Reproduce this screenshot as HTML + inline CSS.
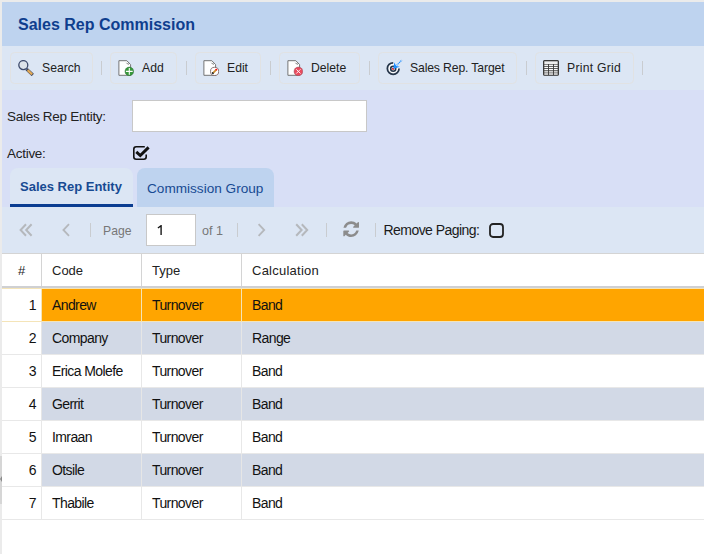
<!DOCTYPE html>
<html><head><meta charset="utf-8">
<style>
*{box-sizing:border-box;margin:0;padding:0}
html,body{width:704px;height:554px;overflow:hidden;background:#ebebeb;font-family:"Liberation Sans",sans-serif;position:relative}
.abs{position:absolute}
#hdr{left:2px;top:2px;width:702px;height:44px;background:#bed3ef}
#title{left:18px;top:15px;font-size:16px;font-weight:bold;color:#0f3e8e;white-space:nowrap;line-height:19px}
#tb{left:2px;top:46px;width:702px;height:44px;background:#dce6f4}
.btn{position:absolute;top:52px;height:32px;border:1px solid #e1e2e3;border-radius:4.5px}
.bt{position:absolute;top:61px;font-size:12.2px;color:#222;white-space:nowrap;line-height:15px}
.sep{position:absolute;top:61px;width:1px;height:14px;background:#c9ccd0}
.ico{position:absolute;top:60px;width:16px;height:16px}
#form{left:2px;top:90px;width:702px;height:117px;background:#d8dff6}
.lbl{position:absolute;font-size:13.5px;letter-spacing:-0.28px;color:#222;white-space:nowrap;line-height:15px}
#inp{left:132px;top:100px;width:235px;height:32px;background:#fff;border:1px solid #c8c8c8}
#tab1{left:10px;top:168px;width:123px;height:39px;background:#dce6f4;border-radius:8px 8px 0 0}
#tab1u{left:10px;top:204px;width:123px;height:3px;background:#0b3d91}
#tab2{left:137px;top:168px;width:137px;height:39px;background:#bed3ef;border-radius:8px 8px 0 0}
.tabt{position:absolute;white-space:nowrap;color:#174a92;line-height:16px}
#pager{left:2px;top:207px;width:702px;height:46px;background:#dce6f4}
.pi{position:absolute;color:#777;white-space:nowrap;line-height:15px;font-size:13px}
#pinp{left:146px;top:214px;width:50px;height:32px;background:#fff;border:1px solid #c8c8c8}
#grid{left:2px;top:253px;width:702px;height:301px;background:#fff;border-top:1px solid #d4d4d4}
.hc{position:absolute;font-size:13px;color:#222;white-space:nowrap;line-height:15px}
.vl{position:absolute;width:1px;background:#e3e3e3}
.row{position:absolute;left:2px;width:702px;height:33px;border-bottom:1px solid #e6e6e6}
.cell{position:absolute;font-size:14px;letter-spacing:-0.6px;color:#111;white-space:nowrap;line-height:15px}
</style></head><body>
<div id="hdr" class="abs"></div>
<div id="title" class="abs">Sales Rep Commission</div>

<div id="tb" class="abs"></div>
<div class="btn" style="left:10px;width:83px"></div>
<div class="btn" style="left:110px;width:67px"></div>
<div class="btn" style="left:195px;width:66px"></div>
<div class="btn" style="left:279px;width:81px"></div>
<div class="btn" style="left:378px;width:139px"></div>
<div class="btn" style="left:535px;width:99px"></div>
<div class="sep" style="left:101px"></div>
<div class="sep" style="left:186px"></div>
<div class="sep" style="left:270px"></div>
<div class="sep" style="left:369px"></div>
<div class="sep" style="left:526px"></div>
<div class="sep" style="left:642px"></div>

<!-- search icon -->
<svg class="ico" style="left:18px" viewBox="0 0 16 16">
<path d="M8.6 9.2 L14.8 15" stroke="#3a4560" stroke-width="3.2" stroke-linecap="butt"/>
<path d="M9.6 10.1 L14.2 14.4" stroke="#e2a955" stroke-width="2.2"/>
<circle cx="5.3" cy="5.1" r="4.5" fill="#dde3ea" stroke="#3e4b6c" stroke-width="1.3"/>
</svg>
<div class="bt" style="left:42px">Search</div>

<!-- add icon -->
<svg class="ico" style="left:118px" viewBox="0 0 16 16">
<path d="M0.9 0.7 H8.8 L12.6 4.6 V15.3 H0.9 Z" fill="#fff" stroke="#6e6e6e" stroke-width="0.95"/>
<path d="M8.5 2.8 Q9.5 4.5 11 4.2" fill="none" stroke="#6e6e6e" stroke-width="0.9"/>
<circle cx="11.3" cy="11.4" r="4.3" fill="#38993b" stroke="#2f6f3a" stroke-width="0.5"/>
<path d="M11.3 8 V14.8 M7.9 11.4 H14.7" stroke="#fff" stroke-width="1.1"/>
</svg>
<div class="bt" style="left:142px">Add</div>

<!-- edit icon -->
<svg class="ico" style="left:203px" viewBox="0 0 16 16">
<path d="M0.9 0.7 H8.8 L12.6 4.6 V15.3 H0.9 Z" fill="#fff" stroke="#6e6e6e" stroke-width="0.95"/>
<path d="M8.5 2.8 Q9.5 4.5 11 4.2" fill="none" stroke="#6e6e6e" stroke-width="0.9"/>
<circle cx="11.6" cy="11.4" r="4.1" fill="#fff" stroke="#6f5656" stroke-width="0.8"/>
<path d="M10.2 12.8 L13.1 9.9" stroke="#c98a2c" stroke-width="1.8"/>
<path d="M12.8 10.2 L13.9 9.1" stroke="#f00" stroke-width="1.9"/>
<path d="M9.3 13.7 L10.3 12.7" stroke="#000" stroke-width="1.9"/>
</svg>
<div class="bt" style="left:227px">Edit</div>

<!-- delete icon -->
<svg class="ico" style="left:287px" viewBox="0 0 16 16">
<path d="M0.9 0.7 H8.8 L12.6 4.6 V15.3 H0.9 Z" fill="#fff" stroke="#6e6e6e" stroke-width="0.95"/>
<path d="M8.5 2.8 Q9.5 4.5 11 4.2" fill="none" stroke="#6e6e6e" stroke-width="0.9"/>
<circle cx="11.4" cy="11.4" r="4.4" fill="#ea4b5e" stroke="#7a4a55" stroke-width="0.4"/>
<path d="M9.3 9.3 L13.5 13.5 M13.5 9.3 L9.3 13.5" stroke="#fff" stroke-width="0.9"/>
</svg>
<div class="bt" style="left:311px">Delete</div>

<!-- target icon -->
<svg class="abs" style="left:386px;top:59px" width="17" height="18" viewBox="0 0 17 18">
<circle cx="7.2" cy="9.6" r="5" fill="#fbfcfd"/>
<path d="M7.2 3.75 A5.85 5.85 0 1 0 13.05 9.6" fill="none" stroke="#26364a" stroke-width="1.75"/>
<circle cx="7.2" cy="9.7" r="2.5" fill="none" stroke="#26364a" stroke-width="1.6"/>
<circle cx="7.1" cy="9.8" r="1.1" fill="#f01010"/>
<path d="M10.6 6.4 L15.9 1.1" stroke="#1c8dff" stroke-width="1.3" stroke-dasharray="1.1 0.7"/>
<path d="M7.3 10 L8.3 3.6 L10.3 7 L13.8 7.8 Z" fill="#1c8dff"/>
</svg>
<div class="bt" style="left:410px;letter-spacing:-0.13px">Sales Rep. Target</div>

<!-- grid icon -->
<svg class="ico" style="left:543px" viewBox="0 0 16 16">
<rect x="0.6" y="0.6" width="14.8" height="14.6" rx="0.9" fill="#383838" stroke="#3a3a3a" stroke-width="1.2"/>
<rect x="1.3" y="1.3" width="13.4" height="2.7" fill="#efefef"/>
<g fill="#fcfcfc">
<rect x="1.3" y="4.6" width="3.8" height="1.35"/><rect x="6" y="4.6" width="4" height="1.35"/><rect x="10.9" y="4.6" width="3.8" height="1.35"/>
<rect x="1.3" y="6.75" width="3.8" height="1.35"/><rect x="6" y="6.75" width="4" height="1.35"/><rect x="10.9" y="6.75" width="3.8" height="1.35"/>
<rect x="1.3" y="8.9" width="3.8" height="1.35"/><rect x="6" y="8.9" width="4" height="1.35"/><rect x="10.9" y="8.9" width="3.8" height="1.35"/>
<rect x="1.3" y="13.3" width="3.8" height="1.4"/><rect x="6" y="13.3" width="4" height="1.4"/><rect x="10.9" y="13.3" width="3.8" height="1.4"/>
</g>
<g fill="#d0d0d0">
<rect x="1.3" y="10.9" width="3.8" height="1.8"/><rect x="6" y="10.9" width="4" height="1.8"/><rect x="10.9" y="10.9" width="3.8" height="1.8"/>
</g>
</svg>
<div class="bt" style="left:567px;letter-spacing:0.25px">Print Grid</div>

<div id="form" class="abs"></div>
<div class="lbl" style="left:7px;top:109px">Sales Rep Entity:</div>
<div id="inp" class="abs"></div>
<div class="lbl" style="left:7px;top:146px">Active:</div>
<svg class="abs" style="left:132px;top:145px" width="18" height="16" viewBox="0 0 18 16">
<path d="M12.8 1.8 H4.2 Q1.8 1.8 1.8 4.2 V11.8 Q1.8 14.2 4.2 14.2 H11.8 Q14.2 14.2 14.2 11.8 V9.6" fill="none" stroke="#111" stroke-width="1.6"/>
<path d="M4.3 6.9 L8.3 10.6 L16.6 2.4" fill="none" stroke="#111" stroke-width="2.9"/>
</svg>

<div id="tab1" class="abs"></div>
<div id="tab1u" class="abs"></div>
<div class="tabt" style="left:20px;top:179px;font-size:13px;font-weight:bold">Sales Rep Entity</div>
<div id="tab2" class="abs"></div>
<div class="tabt" style="left:147px;top:181px;font-size:13.6px">Commission Group</div>

<div id="pager" class="abs"></div>
<svg class="abs" style="left:19px;top:223px" width="14" height="14" viewBox="0 0 14 14">
<path d="M7 1.2 L1.6 7 L7 12.8 M12.6 1.2 L7.2 7 L12.6 12.8" fill="none" stroke="#b5b8bc" stroke-width="2"/>
</svg>
<svg class="abs" style="left:61px;top:223px" width="10" height="14" viewBox="0 0 10 14">
<path d="M8 1.2 L2.4 7 L8 12.8" fill="none" stroke="#b5b8bc" stroke-width="1.8"/>
</svg>
<div class="sep" style="left:90px;top:223px"></div>
<div class="pi" style="left:103px;top:224px;font-size:12.2px">Page</div>
<div id="pinp" class="abs"></div>
<svg class="abs" style="left:157px;top:225px" width="8" height="11" viewBox="0 0 8 11"><path d="M0.9 3 L4.1 0.7 V10" fill="none" stroke="#111" stroke-width="1.35" stroke-linejoin="miter"/></svg>
<div class="pi" style="left:202px;top:224px;font-size:12.6px">of 1</div>
<div class="sep" style="left:237px;top:223px"></div>
<svg class="abs" style="left:257px;top:223px" width="10" height="14" viewBox="0 0 10 14">
<path d="M1.6 1.2 L7.2 7 L1.6 12.8" fill="none" stroke="#b5b8bc" stroke-width="1.8"/>
</svg>
<svg class="abs" style="left:295px;top:223px" width="14" height="14" viewBox="0 0 14 14">
<path d="M1.2 1.2 L6.6 7 L1.2 12.8 M6.8 1.2 L12.2 7 L6.8 12.8" fill="none" stroke="#b5b8bc" stroke-width="2"/>
</svg>
<div class="sep" style="left:326px;top:223px"></div>
<svg class="abs" style="left:342.4px;top:220.3px" width="18.3" height="18.3" viewBox="0 0 1792 1792">
<path fill="#8c8c8c" d="M1639 1056q0 5-1 7-64 268-268 434.5t-478 166.5q-146 0-282.5-55t-243.5-157l-129 129q-19 19-45 19t-45-19-19-45v-448q0-26 19-45t45-19h448q26 0 45 19t19 45-19 45l-137 137q71 66 161 102t187 36q134 0 250-65t186-179q11-17 53-117 8-23 30-23h192q13 0 22.5 9.5t9.5 22.5zm25-800v448q0 26-19 45t-45 19h-448q-26 0-45-19t-19-45 19-45l138-138q-148-137-349-137-134 0-250 65t-186 179q-11 17-53 117-8 23-30 23h-199q-13 0-22.5-9.5t-9.5-22.5v-7q65-268 270-434.5t480-166.5q146 0 284 55.5t245 156.5l130-129q19-19 45-19t45 19 19 45z"/>
</svg>
<div class="sep" style="left:375px;top:223px"></div>
<div class="pi" style="left:383.5px;top:223px;color:#1a1a1a;font-size:14px;letter-spacing:-0.55px">Remove Paging:</div>
<svg class="abs" style="left:489px;top:223px" width="15" height="15" viewBox="0 0 15 15">
<rect x="1" y="1" width="13" height="13" rx="3" fill="none" stroke="#222" stroke-width="1.8"/>
</svg>

<div id="grid" class="abs"></div>
<!-- header -->
<div class="hc" style="left:18px;top:263px">#</div>
<div class="hc" style="left:52px;top:263px">Code</div>
<div class="hc" style="left:152px;top:263px">Type</div>
<div class="hc" style="left:252px;top:263px;letter-spacing:0.25px">Calculation</div>
<div class="abs" style="left:2px;top:286px;width:702px;height:2px;background:#cfd0d3"></div>

<div class="abs" style="left:41px;top:254px;width:1px;height:32px;background:#d4d4d4"></div>
<div class="abs" style="left:141px;top:254px;width:1px;height:32px;background:#d4d4d4"></div>
<div class="abs" style="left:241px;top:254px;width:1px;height:32px;background:#d4d4d4"></div>
<div class="abs" style="left:2px;top:288px;width:702px;height:1px;background:#f4e4b8"></div>
<div class="abs" style="left:42px;top:289px;width:662px;height:32px;background:#ffa500"></div>
<div class="abs" style="left:2px;top:321px;width:702px;height:1px;background:#f4e4b8"></div>
<div class="abs" style="left:41px;top:289px;width:1px;height:32px;background:#f4e4b8"></div>
<div class="abs" style="left:141px;top:289px;width:1px;height:32px;background:#f4e4b8"></div>
<div class="abs" style="left:241px;top:289px;width:1px;height:32px;background:#f4e4b8"></div>
<div class="cell" style="right:668px;top:298px">1</div>
<div class="cell" style="left:52px;top:298px">Andrew</div>
<div class="cell" style="left:152px;top:298px">Turnover</div>
<div class="cell" style="left:252px;top:298px">Band</div>
<div class="abs" style="left:42px;top:322px;width:662px;height:32px;background:#d2d9e6"></div>
<div class="abs" style="left:2px;top:354px;width:702px;height:1px;background:#e8e8e8"></div>
<div class="abs" style="left:41px;top:322px;width:1px;height:32px;background:#e6e6e6"></div>
<div class="abs" style="left:141px;top:322px;width:1px;height:32px;background:#e6e6e6"></div>
<div class="abs" style="left:241px;top:322px;width:1px;height:32px;background:#e6e6e6"></div>
<div class="cell" style="right:668px;top:331px">2</div>
<div class="cell" style="left:52px;top:331px">Company</div>
<div class="cell" style="left:152px;top:331px">Turnover</div>
<div class="cell" style="left:252px;top:331px">Range</div>
<div class="abs" style="left:42px;top:355px;width:662px;height:32px;background:#fff"></div>
<div class="abs" style="left:2px;top:387px;width:702px;height:1px;background:#e8e8e8"></div>
<div class="abs" style="left:41px;top:355px;width:1px;height:32px;background:#e8e8e8"></div>
<div class="abs" style="left:141px;top:355px;width:1px;height:32px;background:#e8e8e8"></div>
<div class="abs" style="left:241px;top:355px;width:1px;height:32px;background:#e8e8e8"></div>
<div class="cell" style="right:668px;top:364px">3</div>
<div class="cell" style="left:52px;top:364px">Erica Molefe</div>
<div class="cell" style="left:152px;top:364px">Turnover</div>
<div class="cell" style="left:252px;top:364px">Band</div>
<div class="abs" style="left:42px;top:388px;width:662px;height:32px;background:#d2d9e6"></div>
<div class="abs" style="left:2px;top:420px;width:702px;height:1px;background:#e8e8e8"></div>
<div class="abs" style="left:41px;top:388px;width:1px;height:32px;background:#e6e6e6"></div>
<div class="abs" style="left:141px;top:388px;width:1px;height:32px;background:#e6e6e6"></div>
<div class="abs" style="left:241px;top:388px;width:1px;height:32px;background:#e6e6e6"></div>
<div class="cell" style="right:668px;top:397px">4</div>
<div class="cell" style="left:52px;top:397px">Gerrit</div>
<div class="cell" style="left:152px;top:397px">Turnover</div>
<div class="cell" style="left:252px;top:397px">Band</div>
<div class="abs" style="left:42px;top:421px;width:662px;height:32px;background:#fff"></div>
<div class="abs" style="left:2px;top:453px;width:702px;height:1px;background:#e8e8e8"></div>
<div class="abs" style="left:41px;top:421px;width:1px;height:32px;background:#e8e8e8"></div>
<div class="abs" style="left:141px;top:421px;width:1px;height:32px;background:#e8e8e8"></div>
<div class="abs" style="left:241px;top:421px;width:1px;height:32px;background:#e8e8e8"></div>
<div class="cell" style="right:668px;top:430px">5</div>
<div class="cell" style="left:52px;top:430px">Imraan</div>
<div class="cell" style="left:152px;top:430px">Turnover</div>
<div class="cell" style="left:252px;top:430px">Band</div>
<div class="abs" style="left:42px;top:454px;width:662px;height:32px;background:#d2d9e6"></div>
<div class="abs" style="left:2px;top:486px;width:702px;height:1px;background:#e8e8e8"></div>
<div class="abs" style="left:41px;top:454px;width:1px;height:32px;background:#e6e6e6"></div>
<div class="abs" style="left:141px;top:454px;width:1px;height:32px;background:#e6e6e6"></div>
<div class="abs" style="left:241px;top:454px;width:1px;height:32px;background:#e6e6e6"></div>
<div class="cell" style="right:668px;top:463px">6</div>
<div class="cell" style="left:52px;top:463px">Otsile</div>
<div class="cell" style="left:152px;top:463px">Turnover</div>
<div class="cell" style="left:252px;top:463px">Band</div>
<div class="abs" style="left:42px;top:487px;width:662px;height:32px;background:#fff"></div>
<div class="abs" style="left:2px;top:519px;width:702px;height:1px;background:#e8e8e8"></div>
<div class="abs" style="left:41px;top:487px;width:1px;height:32px;background:#e8e8e8"></div>
<div class="abs" style="left:141px;top:487px;width:1px;height:32px;background:#e8e8e8"></div>
<div class="abs" style="left:241px;top:487px;width:1px;height:32px;background:#e8e8e8"></div>
<div class="cell" style="right:668px;top:496px">7</div>
<div class="cell" style="left:52px;top:496px">Thabile</div>
<div class="cell" style="left:152px;top:496px">Turnover</div>
<div class="cell" style="left:252px;top:496px">Band</div>
<div class="abs" style="left:0;top:456px;width:2px;height:48px;background:#d6d6d6"></div>
<div class="abs" style="left:0;top:476px;width:0;height:0;border-top:3.5px solid transparent;border-bottom:3.5px solid transparent;border-right:2px solid #8a8a8a"></div>
</body></html>
